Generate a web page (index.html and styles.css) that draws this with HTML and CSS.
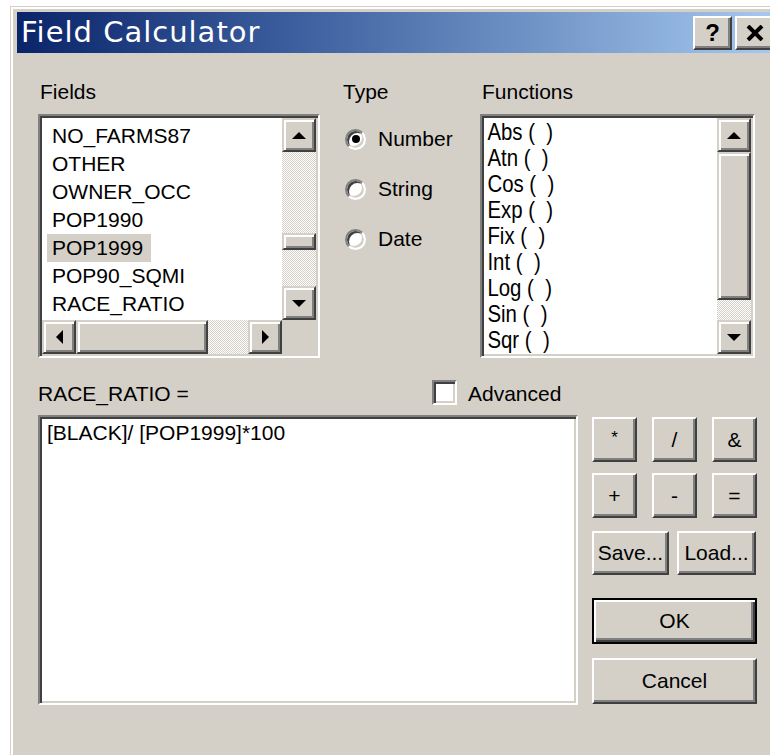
FILE: index.html
```html
<!DOCTYPE html>
<html lang="en">
<head>
<meta charset="utf-8">
<title>Field Calculator</title>
<link rel="stylesheet" href="styles.css">
</head>
<body>
<div class="window">
  <div class="titlebar">
    <span class="title">Field Calculator</span>
    <div class="caption-btns">
      <span class="cap-btn help">?</span>
      <span class="cap-btn close">
        <svg width="18" height="16" viewBox="0 0 18 16"><path d="M2 1 L16 15 M16 1 L2 15" stroke="#000" stroke-width="4" fill="none"/></svg>
      </span>
    </div>
  </div>

  <div class="client">
    <div class="top-row">
      <!-- field names -->
      <div class="fields-col">
        <div class="label pad">Fields</div>
        <div class="sunken listbox fields-list">
          <ul class="items">
            <li><span>NO_FARMS87</span></li>
            <li><span>OTHER</span></li>
            <li><span>OWNER_OCC</span></li>
            <li><span>POP1990</span></li>
            <li><span class="sel">POP1999</span></li>
            <li><span>POP90_SQMI</span></li>
            <li><span>RACE_RATIO</span></li>
          </ul>
          <div class="vscroll">
            <span class="sbtn"><svg width="14" height="7" viewBox="0 0 14 7"><polygon points="7,0 14,7 0,7"/></svg></span>
            <span class="gap-a"></span>
            <span class="thumb short"></span>
            <span class="track"></span>
            <span class="sbtn"><svg width="14" height="7" viewBox="0 0 14 7"><polygon points="0,0 14,0 7,7"/></svg></span>
          </div>
          <div class="hscroll">
            <span class="sbtn"><svg width="7" height="14" viewBox="0 0 7 14"><polygon points="7,0 7,14 0,7"/></svg></span>
            <span class="thumb wide"></span>
            <span class="track"></span>
            <span class="sbtn"><svg width="7" height="14" viewBox="0 0 7 14"><polygon points="0,0 7,7 0,14"/></svg></span>
          </div>
          <div class="corner"></div>
        </div>
      </div>

      <!-- result type -->
      <div class="type-col">
        <div class="label">Type</div>
        <div class="radios">
          <label class="radio-row"><span class="radio"><span class="dot"></span></span>Number</label>
          <label class="radio-row"><span class="radio"></span>String</label>
          <label class="radio-row"><span class="radio"></span>Date</label>
        </div>
      </div>

      <!-- function list -->
      <div class="funcs-col">
        <div class="label pad">Functions</div>
        <div class="sunken listbox funcs-list">
          <div class="items-clip">
            <ul class="items narrow">
              <li>Abs (&nbsp; )</li>
              <li>Atn (&nbsp; )</li>
              <li>Cos (&nbsp; )</li>
              <li>Exp (&nbsp; )</li>
              <li>Fix (&nbsp; )</li>
              <li>Int (&nbsp; )</li>
              <li>Log (&nbsp; )</li>
              <li>Sin (&nbsp; )</li>
              <li>Sqr (&nbsp; )</li>
            </ul>
          </div>
          <div class="vscroll">
            <span class="sbtn"><svg width="14" height="7" viewBox="0 0 14 7"><polygon points="7,0 14,7 0,7"/></svg></span>
            <span class="thumb tall"></span>
            <span class="track"></span>
            <span class="sbtn"><svg width="14" height="7" viewBox="0 0 14 7"><polygon points="0,0 14,0 7,7"/></svg></span>
          </div>
        </div>
      </div>
    </div>

    <div class="expr-head">
      <span>RACE_RATIO =</span>
      <label class="check-row"><span class="checkbox"></span>Advanced</label>
    </div>

    <div class="expr-row">
      <div class="sunken expr">[BLACK]/ [POP1999]*100</div>
      <div class="btn-panel">
        <div class="ops">
          <span class="btn op star">*</span>
          <span class="btn op">/</span>
          <span class="btn op">&amp;</span>
          <span class="btn op">+</span>
          <span class="btn op">-</span>
          <span class="btn op">=</span>
        </div>
        <div class="io">
          <span class="btn save">Save...</span>
          <span class="btn load">Load...</span>
        </div>
        <span class="btn big default">OK</span>
        <span class="btn big cancel">Cancel</span>
      </div>
    </div>
  </div>
</div>
</body>
</html>
```

FILE: styles.css
```css
html, body {
  margin: 0;
  height: 100%;
  overflow: hidden;
  background: #fff;
}

body {
  font-family: "Liberation Sans", Arial, sans-serif;
  font-size: 21px;
  color: #000;
}

/* ---------- window frame ---------- */
.window {
  margin: 6px 0 0 10px;
  width: 761px;
  height: 760px;
  padding: 5px 6px 6px 6px;
  border: 1px solid #d4d0c8;
  box-shadow: inset 2px 2px #fff;
  background: #d4d0c8;
}

.titlebar {
  height: 41px;
  display: flex;
  align-items: center;
  padding: 0 4px 0 4px;
  background: linear-gradient(to right, #0a246a 0%, #3a5c9c 35%, #a6caf0 100%);
}

.title {
  font-family: "DejaVu Sans", sans-serif;
  font-size: 29px;
  line-height: 41px;
  letter-spacing: 1px;
  color: #fff;
}

.caption-btns {
  margin-left: auto;
  display: flex;
  gap: 3px;
}

.cap-btn {
  width: 39px;
  height: 34px;
  box-sizing: border-box;
  display: flex;
  align-items: center;
  justify-content: center;
  background: #d4d0c8;
  border: 2px solid;
  border-color: #fff #404040 #404040 #fff;
  box-shadow: inset -2px -2px #808080;
  font-weight: bold;
  font-size: 24px;
}

/* ---------- client area ---------- */
.client {
  padding: 27px 0 0 21px;
}

.top-row {
  display: flex;
  align-items: flex-start;
}

.label {
  height: 24px;
  line-height: 24px;
  margin-bottom: 10px;
  white-space: nowrap;
}

.label.pad {
  padding-left: 2px;
}

.fields-col { width: 282px; }
.type-col { width: 137px; margin-left: 23px; }
.funcs-col { width: 275px; }

/* sunken 3D edge shared by list boxes, edit box, check box */
.sunken {
  box-sizing: border-box;
  border: 2px solid;
  border-color: #808080 #fff #fff #808080;
  box-shadow: inset 2px 2px #404040, inset -2px -2px #d4d0c8;
  background: #fff;
}

.listbox {
  height: 244px;
  padding: 2px;
}

.fields-list {
  display: grid;
  grid-template-columns: 1fr 34px;
  grid-template-rows: 1fr 34px;
}

.funcs-list {
  display: grid;
  grid-template-columns: 1fr 34px;
}

.items {
  list-style: none;
  margin: 0;
  overflow: hidden;
}

.fields-list .items {
  padding: 4px 0 0 5px;
  line-height: 28px;
}

.fields-list .items span {
  display: inline-block;
  padding: 0 8px 0 5px;
}

.fields-list .items .sel {
  background: #d4d0c8;
}

.items-clip {
  overflow: hidden;
}

/* the function list uses a tall, condensed face */
.items.narrow {
  padding: 1px 0 0 4px;
  font-size: 24px;
  line-height: 26px;
  white-space: nowrap;
  transform: scaleX(0.85);
  transform-origin: 0 0;
  overflow: visible;
}

/* ---------- scroll bars ---------- */
.vscroll, .hscroll {
  display: flex;
  background: repeating-conic-gradient(#fff 0 25%, #d4d0c8 0 50%) 0 0 / 2px 2px;
}

.vscroll { flex-direction: column; }

.sbtn, .thumb {
  box-sizing: border-box;
  background: #d4d0c8;
  border: 2px solid;
  border-color: #d4d0c8 #404040 #404040 #d4d0c8;
  box-shadow: inset 2px 2px #fff, inset -2px -2px #808080;
}

.sbtn {
  flex: 0 0 34px;
  display: flex;
  align-items: center;
  justify-content: center;
}

.sbtn svg { fill: #000; display: block; }

.track { flex: 1; }

.gap-a { flex: 0 0 81px; }
.thumb.short { flex: 0 0 17px; }
.thumb.wide { flex: 0 0 132px; }
.thumb.tall { flex: 0 0 148px; }

.corner { background: #d4d0c8; }

/* ---------- radio buttons ---------- */
.radios {
  margin-top: 4px;
}

.radio-row {
  height: 50px;
  display: flex;
  align-items: center;
  gap: 12px;
  padding-left: 2px;
}

.radio {
  width: 21px;
  height: 21px;
  box-sizing: border-box;
  border-radius: 50%;
  border: 2px solid;
  border-color: #808080 #fff #fff #808080;
  box-shadow: inset 2px 2px #404040, inset -2px -2px #d4d0c8;
  background: #fff;
  display: flex;
  align-items: center;
  justify-content: center;
}

.dot {
  width: 8px;
  height: 8px;
  border-radius: 50%;
  background: #000;
}

/* ---------- expression ---------- */
.expr-head {
  margin-top: 24px;
  height: 24px;
  line-height: 24px;
  display: grid;
  grid-template-columns: 394px auto;
  align-items: center;
}

.check-row {
  display: flex;
  align-items: center;
  gap: 11px;
}

.checkbox {
  width: 25px;
  height: 25px;
  box-sizing: border-box;
  border: 2px solid;
  border-color: #808080 #fff #fff #808080;
  box-shadow: inset 2px 2px #404040, inset -2px -2px #d4d0c8;
  background: #fff;
  margin-top: -3px;
}

.expr-row {
  margin-top: 9px;
  display: flex;
  align-items: flex-start;
}

.expr {
  width: 540px;
  height: 290px;
  padding: 4px 0 0 7px;
  line-height: 24px;
}

.btn-panel {
  width: 165px;
  margin-left: 14px;
  padding-top: 2px;
  display: flex;
  flex-direction: column;
}

.btn {
  box-sizing: border-box;
  display: flex;
  align-items: center;
  justify-content: center;
  background: #d4d0c8;
  border: 2px solid;
  border-color: #fff #404040 #404040 #fff;
  box-shadow: inset -2px -2px #808080;
}

.ops {
  display: grid;
  grid-template-columns: repeat(3, 45px);
  grid-auto-rows: 45px;
  column-gap: 15px;
  row-gap: 11px;
}

.op.star {
  align-items: flex-start;
  padding-top: 9px;
  font-size: 17px;
}

.io {
  margin-top: 13px;
  display: flex;
  gap: 8px;
}

.save { width: 77px; height: 44px; }
.load { width: 79px; height: 44px; }

.big {
  height: 46px;
}

.default {
  margin-top: 23px;
  border-color: #000;
  box-shadow: inset 2px 2px #fff, inset -2px -2px #404040, inset -4px -4px #808080;
}

.cancel {
  margin-top: 14px;
}
```
